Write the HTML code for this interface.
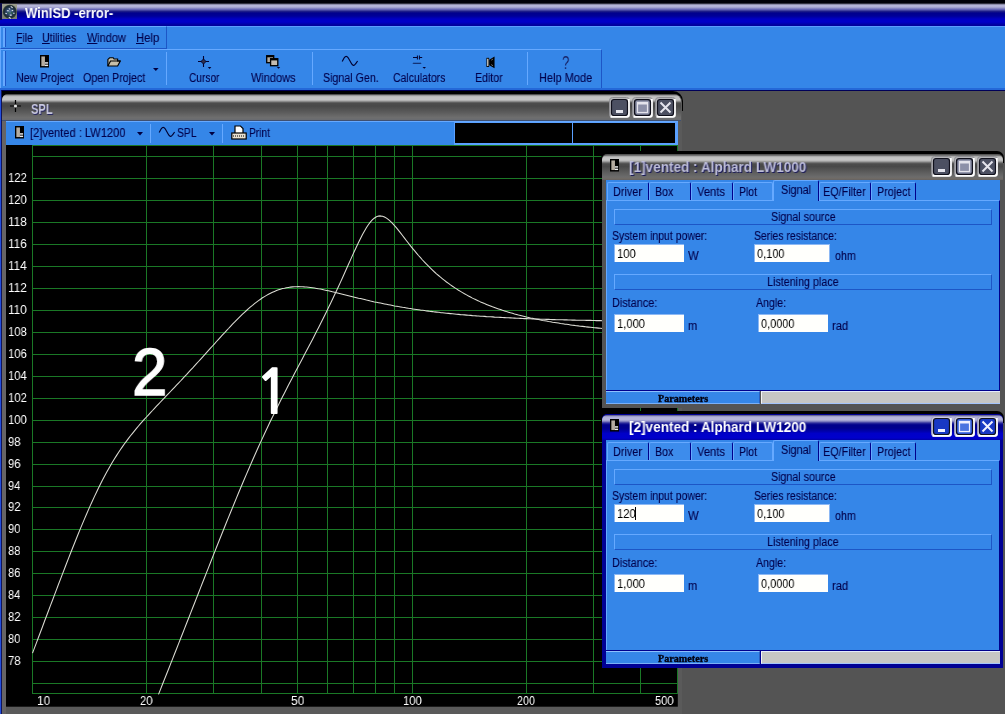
<!DOCTYPE html>
<html lang="en"><head><meta charset="utf-8"><title>WinISD -error-</title>
<style>
html,body{margin:0;padding:0}
body{width:1005px;height:714px;overflow:hidden;position:relative;background:#545454;font-family:"Liberation Sans",sans-serif;font-size:12px;color:#00004c}
.abs{position:absolute}
.t{position:absolute;white-space:nowrap;transform-origin:0 0;will-change:transform}
.k{-webkit-text-stroke:0.12px currentColor}
.t u{text-decoration:underline;text-decoration-thickness:1px;text-underline-offset:1px}
.sep{position:absolute;width:1px;background:#66a9ff}
</style></head>
<body>
<div class="abs" style="left:0px;top:0px;width:1005px;height:26px;background:linear-gradient(#000008 0,#000008 3px,#8c8ca8 4.5px,#b4b4d8 5.5px,#b0b0d6 7px,#6464b4 9.5px,#1c1c88 11.5px,#00008c 13px,#000098 16px,#0000c4 19px,#0000c8 22px,#0000a4 24.5px,#000098 26px);"></div>
<svg class="abs" style="left:1.6px;top:3.6px" width="15.5" height="15.5" viewBox="0 0 16 16"><defs><radialGradient id="spk" cx="0.5" cy="0.5" r="0.5"><stop offset="0" stop-color="#5a7a9c"/><stop offset="0.45" stop-color="#2c4468"/><stop offset="0.8" stop-color="#1c2c34"/><stop offset="1" stop-color="#3c4a40"/></radialGradient></defs><rect width="16" height="16" fill="#9a9c8c"/><rect x="0" y="8" width="16" height="8" fill="#7c8078"/><circle cx="8" cy="8" r="7.3" fill="url(#spk)"/><path d="M9 2.500l2 1.500M5 7h2M10 6.500l1.500 0.500M3.500 9.500l1.500 0.500M8 11.500h2M7 13.500l2 1.500M11.500 9.500h1.500M7 4.500l1.500 1" stroke="#dfe6f0" stroke-width="1.1" fill="none"/><path d="M6 9l2 0.500M9.500 8.500l1 1.500" stroke="#2c6a3c" stroke-width="1.2" fill="none"/></svg>
<div class="abs" style="left:0px;top:3px;width:1.6px;height:17px;background:#0c0c48;"></div>
<div class="t " style="left:25.20px;top:6.10px;font-size:14px;line-height:14px;transform:scaleX(0.9316);font-weight:bold;color:#fff;">WinISD -error-</div>
<div class="abs" style="left:0px;top:26px;width:1005px;height:62px;background:#3586e8;"></div>
<div class="abs" style="left:0px;top:26px;width:1005px;height:1px;background:#5c9cff;"></div>
<div class="abs" style="left:0px;top:26px;width:167px;height:23px;box-sizing:border-box;border-top:1px solid #66a9ff;border-left:1px solid #66a9ff;border-bottom:1px solid #1d56c6;border-right:1px solid #1d56c6;"></div>
<div class="abs" style="left:3px;top:28px;width:1.5px;height:19px;background:#66a9ff;"></div>
<div class="abs" style="left:4.5px;top:28px;width:1px;height:19px;background:#1d56c6;"></div>
<div class="t k" style="left:15.67px;top:31.85px;font-size:12.5px;line-height:12.5px;transform:scaleX(0.8333);"><u>F</u>ile</div>
<div class="t k" style="left:42.19px;top:31.85px;font-size:12.5px;line-height:12.5px;transform:scaleX(0.8535);"><u>U</u>tilities</div>
<div class="t k" style="left:86.96px;top:31.85px;font-size:12.5px;line-height:12.5px;transform:scaleX(0.8719);"><u>W</u>indow</div>
<div class="t k" style="left:136.40px;top:31.85px;font-size:12.5px;line-height:12.5px;transform:scaleX(0.9050);"><u>H</u>elp</div>
<div class="abs" style="left:0px;top:49px;width:602px;height:39px;box-sizing:border-box;border-top:1px solid #66a9ff;border-left:1px solid #66a9ff;border-right:1px solid #1d56c6;"></div>
<div class="abs" style="left:3px;top:51px;width:1.5px;height:35px;background:#66a9ff;"></div>
<div class="abs" style="left:4.5px;top:51px;width:1px;height:35px;background:#1d56c6;"></div>
<div class="t k" style="left:16.14px;top:71.85px;font-size:12.5px;line-height:12.5px;transform:scaleX(0.8552);">New Project</div>
<div class="t k" style="left:83.13px;top:71.85px;font-size:12.5px;line-height:12.5px;transform:scaleX(0.8528);">Open Project</div>
<div class="t k" style="left:189.01px;top:71.85px;font-size:12.5px;line-height:12.5px;transform:scaleX(0.8109);">Cursor</div>
<div class="t k" style="left:251.26px;top:71.85px;font-size:12.5px;line-height:12.5px;transform:scaleX(0.8765);">Windows</div>
<div class="t k" style="left:323.03px;top:71.85px;font-size:12.5px;line-height:12.5px;transform:scaleX(0.8531);">Signal Gen.</div>
<div class="t k" style="left:393.10px;top:71.85px;font-size:12.5px;line-height:12.5px;transform:scaleX(0.8381);">Calculators</div>
<div class="t k" style="left:474.65px;top:71.85px;font-size:12.5px;line-height:12.5px;transform:scaleX(0.8476);">Editor</div>
<div class="t k" style="left:538.62px;top:71.85px;font-size:12.5px;line-height:12.5px;transform:scaleX(0.8812);">Help Mode</div>
<div class="sep" style="left:166px;top:52px;height:33px"></div>
<div class="sep" style="left:312px;top:52px;height:33px"></div>
<div class="sep" style="left:527px;top:52px;height:33px"></div>
<svg class="abs" style="left:153.2px;top:68px" width="6" height="4"><path d="M0 0H5.600L2.800 3Z" fill="#000040"/></svg>
<svg class="abs" style="left:40.2px;top:55.3px" width="9" height="12.5" viewBox="0 0 10 13" preserveAspectRatio="none"><rect x="0" y="0" width="10" height="13" fill="#000"/><rect x="1.5" y="1.5" width="4" height="10" fill="#b4aca0"/><rect x="5.5" y="7.500" width="3.500" height="1.500" fill="#eee"/><rect x="5.5" y="10" width="3.500" height="1.500" fill="#eee"/></svg>
<svg class="abs" style="left:107px;top:56.8px" width="14.2" height="9.8" viewBox="0 0 16 12" preserveAspectRatio="none"><path d="M1 11V3L3 1H7L8 2.5H12V5H15L12 11Z" fill="#c8c0aa" stroke="#000" stroke-width="1.3"/><path d="M1 11L4 5H15" fill="none" stroke="#000" stroke-width="1.3"/></svg>
<svg class="abs" style="left:197.9px;top:55.9px" width="14" height="14" viewBox="0 0 14 14"><path d="M5.5 0V11M0 5.5H11" stroke="#000030" stroke-width="1.1"/><rect x="3.7" y="3.7" width="3.6" height="3.6" fill="#30304c" stroke="#000028" stroke-width="0.8" transform="rotate(45 5.5 5.5)"/><path d="M9.8 11H13.4L11.6 13Z" fill="#000030"/></svg>
<svg class="abs" style="left:266px;top:55px" width="15" height="15" viewBox="0 0 15 15"><rect x="0.7" y="0.7" width="7" height="7" fill="#b4aca0" stroke="#000" stroke-width="1.3"/><rect x="0.7" y="0.7" width="7" height="1.6" fill="#000"/><rect x="4.6" y="3.7" width="7.2" height="7" fill="#c4bcb0" stroke="#000" stroke-width="1.3"/><rect x="4.6" y="3.6" width="7.2" height="1.8" fill="#000"/><path d="M10.8 12H14.2L12.500 13.800Z" fill="#000030"/></svg>
<svg class="abs" style="left:341px;top:55px" width="18" height="13" viewBox="0 0 18 13"><path d="M1.2 6.500L3.200 2.800Q5.200 0 7.200 2.800L10 7.800Q12.300 12.400 14.600 8.800L16.600 6" fill="none" stroke="#000030" stroke-width="1.15"/></svg>
<svg class="abs" style="left:412px;top:54px" width="16" height="16" viewBox="0 0 16 16"><path d="M1 3.500H5.200M7.600 3.500H10.200M5.400 1.500V5.500M7.400 1.500V5.500" stroke="#000030" stroke-width="1" fill="none"/><path d="M1 9.800L2 8.800L3 9.800L4 8.800L5 9.800L6 8.800L7 9.800L8 8.800L9 9.800" stroke="#000030" stroke-width="0.9" fill="none"/><path d="M10.500 13H14L12.250 14.800Z" fill="#000030"/></svg>
<svg class="abs" style="left:485.8px;top:55.8px" width="9" height="12.800" viewBox="0 0 10 14" preserveAspectRatio="none"><path d="M3.500 4L9.500 0.500V13.500L3.500 10Z" fill="#000"/><rect x="0.500" y="2" width="3" height="10" fill="#000"/><rect x="1.300" y="3" width="1.400" height="8" fill="#e0dcd0"/><path d="M6 4.500l1.500 -1M6 9.500l1.500 1" stroke="#c8c8c8" stroke-width="0.8"/></svg>
<div class="t " style="left:561.79px;top:54.10px;font-size:18px;line-height:18px;transform:scaleX(0.7283);color:#182468;">?</div>
<div class="abs" style="left:0px;top:88px;width:1005px;height:1.6px;background:#2468d8;"></div>
<div class="abs" style="left:0px;top:89.6px;width:1005px;height:1.4px;background:#000058;"></div>
<div class="abs" style="left:0px;top:90px;width:1.5px;height:624px;background:#2450dc;"></div>
<div class="abs" style="left:2px;top:90.5px;width:680.5px;height:20px;background:#000;border-radius:0 10px 0 0;"></div>
<div class="abs" style="left:2px;top:94px;width:679.5px;height:620px;background:#5a5a5a;border-radius:6px 8px 0 0;"></div>
<div class="abs" style="left:2.2px;top:121px;width:3.9px;height:593px;background:#666464;"></div>
<div class="abs" style="left:1.4px;top:90px;width:0.8px;height:624px;background:#101458;"></div>
<div class="abs" style="left:2px;top:94px;width:679px;height:27px;background:linear-gradient(#505050 0.5px,#9a9a9a 1.5px,#bcbcbc 2.5px,#c4c4c4 3.5px,#c4c4c4 5.5px,#b0b0b0 6.5px,#8a8a8a 7.5px,#606060 8.5px,#4c4c4c 9.5px,#484848 12px,#5c5c5c 18.5px,#6e6e6e 23.5px,#6a6c70 25.5px,#405070 26.5px);border-radius:6px 8px 0 0;"></div>
<svg class="abs" style="left:10px;top:100px" width="12" height="12" viewBox="0 0 12 12"><path d="M5.5 0V12M0 6H11" stroke="#000" stroke-width="1.2"/><circle cx="5.5" cy="6" r="1.6" fill="#e0e0e0"/></svg>
<div class="t " style="left:30.68px;top:102.10px;font-size:14px;line-height:14px;transform:scaleX(0.7940);font-weight:bold;color:#c8c8e0;text-shadow:1px 1px 0 #282860;">SPL</div>
<svg class="abs" style="left:608.8px;top:96.8px" width="21" height="21" viewBox="0 0 21 21">
<rect x="0.5" y="0.5" width="20" height="20" rx="3" fill="#b4b4b8" stroke="#8e8e92" stroke-width="1"/>
<path d="M1.5 19.7H18Q19.7 19.7 19.7 18V2" fill="none" stroke="#fff" stroke-width="2.2"/>
<rect x="2.500" y="2.500" width="16" height="16" rx="2.500" fill="#4c5062" stroke="#10101c" stroke-width="1.2"/>
<rect x="7" y="13" width="7" height="3" fill="#e4e4ec"/>
</svg>
<svg class="abs" style="left:632.0px;top:96.8px" width="21" height="21" viewBox="0 0 21 21">
<rect x="0.5" y="0.5" width="20" height="20" rx="3" fill="#b4b4b8" stroke="#8e8e92" stroke-width="1"/>
<path d="M1.5 19.7H18Q19.7 19.7 19.7 18V2" fill="none" stroke="#fff" stroke-width="2.2"/>
<rect x="2.500" y="2.500" width="16" height="16" rx="2.500" fill="#4c5062" stroke="#10101c" stroke-width="1.2"/>
<rect x="3.500" y="3.500" width="14" height="14" rx="2" fill="#8c90a8"/>
<rect x="5.500" y="5.500" width="10" height="10" fill="none" stroke="#e4e4ec" stroke-width="1.2"/>
<rect x="5" y="5" width="11" height="2.500" fill="#e4e4ec"/>
</svg>
<svg class="abs" style="left:655.2px;top:96.8px" width="21" height="21" viewBox="0 0 21 21">
<rect x="0.5" y="0.5" width="20" height="20" rx="3" fill="#b4b4b8" stroke="#8e8e92" stroke-width="1"/>
<path d="M1.5 19.7H18Q19.7 19.7 19.7 18V2" fill="none" stroke="#fff" stroke-width="2.2"/>
<rect x="2.500" y="2.500" width="16" height="16" rx="2.500" fill="#4c5062" stroke="#10101c" stroke-width="1.2"/>
<path d="M5.500 5.500 L15.500 15.500 M15.500 5.500 L5.500 15.500" stroke="#e4e4ec" stroke-width="2" fill="none"/>
</svg>
<div class="abs" style="left:6px;top:121px;width:672px;height:24px;background:#3586e8;box-sizing:border-box;border-top:1px solid #66a9ff;"></div>
<svg class="abs" style="left:15px;top:126px" width="9" height="12.5" viewBox="0 0 10 13" preserveAspectRatio="none"><rect x="0" y="0" width="10" height="13" fill="#000"/><rect x="1.5" y="1.5" width="4" height="10" fill="#b4aca0"/><rect x="5.5" y="7.500" width="3.500" height="1.500" fill="#eee"/><rect x="5.5" y="10" width="3.500" height="1.500" fill="#eee"/></svg>
<div class="t k" style="left:30.04px;top:126.85px;font-size:12.5px;line-height:12.5px;transform:scaleX(0.8884);">[2]vented : LW1200</div>
<svg class="abs" style="left:136.7px;top:132px" width="6" height="4"><path d="M0 0H6L3 3.5Z" fill="#000040"/></svg>
<div class="sep" style="left:150px;top:124px;height:19px"></div>
<svg class="abs" style="left:158.2px;top:126px" width="18" height="13" viewBox="0 0 18 13"><path d="M1.2 6.500L3.200 2.800Q5.200 0 7.200 2.800L10 7.800Q12.300 12.400 14.600 8.800L16.600 6" fill="none" stroke="#000030" stroke-width="1.15"/></svg>
<div class="t k" style="left:177.44px;top:126.85px;font-size:12.5px;line-height:12.5px;transform:scaleX(0.8282);">SPL</div>
<svg class="abs" style="left:208.7px;top:132px" width="6" height="4"><path d="M0 0H6L3 3.5Z" fill="#000040"/></svg>
<div class="sep" style="left:222px;top:124px;height:19px"></div>
<svg class="abs" style="left:231px;top:125px" width="16" height="16" viewBox="0 0 16 16"><path d="M4 8V1H9.5L12 3.5V8" fill="#fff" stroke="#000" stroke-width="1.2"/><rect x="0.8" y="8" width="14.4" height="6" fill="#e8e0d0" stroke="#000" stroke-width="1.2"/><path d="M2 11H14" stroke="#000" stroke-width="1" stroke-dasharray="1 1"/></svg>
<div class="t k" style="left:249.28px;top:126.85px;font-size:12.5px;line-height:12.5px;transform:scaleX(0.8154);">Print</div>
<div class="abs" style="left:453.8px;top:121.5px;width:224px;height:23px;background:#5aa0ff;"></div>
<div class="abs" style="left:454.8px;top:123.4px;width:117.2px;height:19.2px;background:#000;"></div>
<div class="abs" style="left:573.2px;top:123.4px;width:102px;height:19.2px;background:#000;"></div>
<svg class="abs" style="left:0;top:0" width="1005" height="714" viewBox="0 0 1005 714">
<rect x="6" y="145" width="671.8" height="561.7" fill="#000"/>
<path d="M32.0 156.5 H678 M32.0 178.5 H678 M32.0 200.5 H678 M32.0 222.5 H678 M32.0 244.5 H678 M32.0 266.5 H678 M32.0 288.5 H678 M32.0 310.5 H678 M32.0 332.5 H678 M32.0 354.5 H678 M32.0 376.5 H678 M32.0 398.5 H678 M32.0 420.5 H678 M32.0 442.5 H678 M32.0 464.5 H678 M32.0 486.5 H678 M32.0 507.5 H678 M32.0 529.5 H678 M32.0 551.5 H678 M32.0 573.5 H678 M32.0 595.5 H678 M32.0 617.5 H678 M32.0 639.5 H678 M32.0 661.5 H678 M32.0 683.5 H678 M32.0 145.5 H678 M32.0 693.5 H678 M32.5 145.0 V694.0 M146.5 145.0 V694.0 M213.5 145.0 V694.0 M261.5 145.0 V694.0 M297.5 145.0 V694.0 M327.5 145.0 V694.0 M353.5 145.0 V694.0 M375.5 145.0 V694.0 M394.5 145.0 V694.0 M412.5 145.0 V694.0 M526.5 145.0 V694.0 M593.5 145.0 V694.0 M640.5 145.0 V694.0 M677.5 145.0 V694.0" stroke="#1a7826" stroke-width="1" fill="none" shape-rendering="crispEdges"/>
<path d="M32.5 653.1 34.5 647.9 36.5 642.6 38.5 637.3 40.5 632 42.5 626.7 44.5 621.3 46.5 616 48.5 610.7 50.5 605.4 52.5 600.2 54.5 594.9 56.5 589.6 58.5 584.3 60.5 579.1 62.5 573.9 64.5 568.7 66.5 563.5 68.5 558.4 70.5 553.3 72.5 548.2 74.5 543.2 76.5 538.2 78.5 533.3 80.5 528.4 82.5 523.6 84.5 518.9 86.5 514.2 88.5 509.6 90.5 505.1 92.5 500.7 94.5 496.4 96.5 492.2 98.5 488.1 100.5 484 102.5 480.1 104.5 476.3 106.5 472.6 108.5 469 110.5 465.5 112.5 462.1 114.5 458.8 116.5 455.6 118.5 452.5 120.5 449.5 122.5 446.6 124.5 443.8 126.5 441.1 128.5 438.4 130.5 435.8 132.5 433.3 134.5 430.8 136.5 428.4 138.5 426 140.5 423.7 142.5 421.4 144.5 419.2 146.5 417 148.5 414.8 150.5 412.6 152.5 410.5 154.5 408.3 156.5 406.2 158.5 404.1 160.5 402 162.5 399.9 164.5 397.8 166.5 395.7 168.5 393.6 170.5 391.5 172.5 389.4 174.5 387.3 176.5 385.2 178.5 383.1 180.5 381 182.5 378.8 184.5 376.7 186.5 374.6 188.5 372.4 190.5 370.2 192.5 368.1 194.5 365.9 196.5 363.7 198.5 361.5 200.5 359.3 202.5 357.1 204.5 354.9 206.5 352.6 208.5 350.4 210.5 348.2 212.5 346 214.5 343.8 216.5 341.5 218.5 339.3 220.5 337.1 222.5 334.9 224.5 332.8 226.5 330.6 228.5 328.5 230.5 326.3 232.5 324.2 234.5 322.2 236.5 320.1 238.5 318.1 240.5 316.1 242.5 314.2 244.5 312.3 246.5 310.5 248.5 308.7 250.5 306.9 252.5 305.3 254.5 303.6 256.5 302.1 258.5 300.6 260.5 299.2 262.5 297.8 264.5 296.6 266.5 295.4 268.5 294.2 270.5 293.2 272.5 292.2 274.5 291.4 276.5 290.6 278.5 289.8 280.5 289.2 282.5 288.6 284.5 288.2 286.5 287.7 288.5 287.4 290.5 287.1 292.5 286.9 294.5 286.8 296.5 286.7 298.5 286.6 300.5 286.7 302.5 286.7 304.5 286.9 306.5 287 308.5 287.2 310.5 287.5 312.5 287.8 314.5 288.1 316.5 288.4 318.5 288.8 320.5 289.1 322.5 289.5 324.5 290 326.5 290.4 328.5 290.8 330.5 291.3 332.5 291.8 334.5 292.2 336.5 292.7 338.5 293.2 340.5 293.7 342.5 294.2 344.5 294.7 346.5 295.2 348.5 295.7 350.5 296.2 352.5 296.7 354.5 297.2 356.5 297.7 358.5 298.2 360.5 298.6 362.5 299.1 364.5 299.6 366.5 300.1 368.5 300.5 370.5 301 372.5 301.4 374.5 301.9 376.5 302.3 378.5 302.7 380.5 303.1 382.5 303.5 384.5 303.9 386.5 304.3 388.5 304.7 390.5 305.1 392.5 305.5 394.5 305.9 396.5 306.2 398.5 306.6 400.5 306.9 402.5 307.3 404.5 307.6 406.5 307.9 408.5 308.3 410.5 308.6 412.5 308.9 414.5 309.2 416.5 309.5 418.5 309.8 420.5 310.1 422.5 310.3 424.5 310.6 426.5 310.9 428.5 311.1 430.5 311.4 432.5 311.6 434.5 311.9 436.5 312.1 438.5 312.3 440.5 312.6 442.5 312.8 444.5 313 446.5 313.2 448.5 313.4 450.5 313.6 452.5 313.8 454.5 314 456.5 314.2 458.5 314.4 460.5 314.6 462.5 314.7 464.5 314.9 466.5 315.1 468.5 315.3 470.5 315.4 472.5 315.6 474.5 315.7 476.5 315.9 478.5 316 480.5 316.2 482.5 316.3 484.5 316.4 486.5 316.6 488.5 316.7 490.5 316.8 492.5 316.9 494.5 317.1 496.5 317.2 498.5 317.3 500.5 317.4 502.5 317.5 504.5 317.6 506.5 317.7 508.5 317.8 510.5 317.9 512.5 318 514.5 318.1 516.5 318.2 518.5 318.3 520.5 318.4 522.5 318.5 524.5 318.6 526.5 318.6 528.5 318.7 530.5 318.8 532.5 318.9 534.5 319 536.5 319 538.5 319.1 540.5 319.2 542.5 319.2 544.5 319.3 546.5 319.4 548.5 319.4 550.5 319.5 552.5 319.6 554.5 319.6 556.5 319.7 558.5 319.7 560.5 319.8 562.5 319.8 564.5 319.9 566.5 319.9 568.5 320 570.5 320 572.5 320.1 574.5 320.1 576.5 320.2 578.5 320.2 580.5 320.3 582.5 320.3 584.5 320.3 586.5 320.4 588.5 320.4 590.5 320.4 592.5 320.5 594.5 320.5 596.5 320.6 598.5 320.6 600.5 320.6 602.5 320.7" stroke="#dcdcd4" stroke-width="1.06" fill="none" stroke-linejoin="round"/>
<path d="M158.5 694.4 160.5 689.4 162.5 684.3 164.5 679.3 166.5 674.2 168.5 669.2 170.5 664.1 172.5 659.1 174.5 654 176.5 649 178.5 643.9 180.5 638.8 182.5 633.7 184.5 628.6 186.5 623.5 188.5 618.5 190.5 613.4 192.5 608.3 194.5 603.2 196.5 598.1 198.5 593 200.5 587.9 202.5 582.8 204.5 577.7 206.5 572.6 208.5 567.6 210.5 562.5 212.5 557.4 214.5 552.4 216.5 547.3 218.5 542.3 220.5 537.3 222.5 532.3 224.5 527.3 226.5 522.3 228.5 517.4 230.5 512.5 232.5 507.6 234.5 502.7 236.5 497.9 238.5 493 240.5 488.3 242.5 483.5 244.5 478.8 246.5 474.1 248.5 469.5 250.5 464.9 252.5 460.3 254.5 455.8 256.5 451.3 258.5 446.8 260.5 442.4 262.5 438.1 264.5 433.8 266.5 429.5 268.5 425.3 270.5 421.1 272.5 417 274.5 412.9 276.5 408.8 278.5 404.8 280.5 400.8 282.5 396.8 284.5 392.9 286.5 389 288.5 385.1 290.5 381.3 292.5 377.5 294.5 373.6 296.5 369.8 298.5 366 300.5 362.2 302.5 358.4 304.5 354.6 306.5 350.8 308.5 347 310.5 343.2 312.5 339.4 314.5 335.5 316.5 331.6 318.5 327.7 320.5 323.8 322.5 319.8 324.5 315.8 326.5 311.7 328.5 307.6 330.5 303.5 332.5 299.3 334.5 295.1 336.5 290.8 338.5 286.5 340.5 282.1 342.5 277.7 344.5 273.3 346.5 268.8 348.5 264.3 350.5 259.9 352.5 255.4 354.5 251 356.5 246.7 358.5 242.5 360.5 238.4 362.5 234.5 364.5 230.9 366.5 227.5 368.5 224.5 370.5 221.9 372.5 219.7 374.5 218 376.5 216.8 378.5 216.1 380.5 215.9 382.5 216.2 384.5 217 386.5 218.1 388.5 219.6 390.5 221.4 392.5 223.4 394.5 225.6 396.5 227.9 398.5 230.4 400.5 232.9 402.5 235.5 404.5 238.1 406.5 240.7 408.5 243.3 410.5 245.8 412.5 248.3 414.5 250.7 416.5 253.1 418.5 255.5 420.5 257.7 422.5 260 424.5 262.1 426.5 264.2 428.5 266.2 430.5 268.2 432.5 270.1 434.5 272 436.5 273.8 438.5 275.5 440.5 277.2 442.5 278.8 444.5 280.4 446.5 282 448.5 283.4 450.5 284.9 452.5 286.3 454.5 287.6 456.5 288.9 458.5 290.2 460.5 291.4 462.5 292.6 464.5 293.8 466.5 294.9 468.5 296 470.5 297 472.5 298.1 474.5 299.1 476.5 300 478.5 300.9 480.5 301.9 482.5 302.7 484.5 303.6 486.5 304.4 488.5 305.2 490.5 306 492.5 306.8 494.5 307.5 496.5 308.2 498.5 308.9 500.5 309.6 502.5 310.3 504.5 310.9 506.5 311.6 508.5 312.2 510.5 312.8 512.5 313.3 514.5 313.9 516.5 314.4 518.5 315 520.5 315.5 522.5 316 524.5 316.5 526.5 317 528.5 317.4 530.5 317.9 532.5 318.3 534.5 318.8 536.5 319.2 538.5 319.6 540.5 320 542.5 320.4 544.5 320.7 546.5 321.1 548.5 321.5 550.5 321.8 552.5 322.2 554.5 322.5 556.5 322.8 558.5 323.1 560.5 323.5 562.5 323.8 564.5 324.1 566.5 324.3 568.5 324.6 570.5 324.9 572.5 325.2 574.5 325.4 576.5 325.7 578.5 325.9 580.5 326.2 582.5 326.4 584.5 326.6 586.5 326.9 588.5 327.1 590.5 327.3 592.5 327.5 594.5 327.7 596.5 327.9 598.5 328.1 600.5 328.3 602.5 328.5" stroke="#dcdcd4" stroke-width="1.06" fill="none" stroke-linejoin="round"/>
</svg>
<div class="t " style="left:7.94px;top:171.85px;font-size:12.5px;line-height:12.5px;transform:scaleX(0.9016);color:#fff;">122</div>
<div class="t " style="left:7.95px;top:193.85px;font-size:12.5px;line-height:12.5px;transform:scaleX(0.8946);color:#fff;">120</div>
<div class="t " style="left:7.91px;top:215.85px;font-size:12.5px;line-height:12.5px;transform:scaleX(0.9405);color:#fff;">118</div>
<div class="t " style="left:7.91px;top:237.85px;font-size:12.5px;line-height:12.5px;transform:scaleX(0.9405);color:#fff;">116</div>
<div class="t " style="left:7.91px;top:259.85px;font-size:12.5px;line-height:12.5px;transform:scaleX(0.9330);color:#fff;">114</div>
<div class="t " style="left:7.90px;top:281.85px;font-size:12.5px;line-height:12.5px;transform:scaleX(0.9457);color:#fff;">112</div>
<div class="t " style="left:7.91px;top:303.85px;font-size:12.5px;line-height:12.5px;transform:scaleX(0.9380);color:#fff;">110</div>
<div class="t " style="left:7.95px;top:325.85px;font-size:12.5px;line-height:12.5px;transform:scaleX(0.8969);color:#fff;">108</div>
<div class="t " style="left:7.95px;top:347.85px;font-size:12.5px;line-height:12.5px;transform:scaleX(0.8969);color:#fff;">106</div>
<div class="t " style="left:7.95px;top:369.85px;font-size:12.5px;line-height:12.5px;transform:scaleX(0.8900);color:#fff;">104</div>
<div class="t " style="left:7.94px;top:391.85px;font-size:12.5px;line-height:12.5px;transform:scaleX(0.9016);color:#fff;">102</div>
<div class="t " style="left:7.95px;top:413.85px;font-size:12.5px;line-height:12.5px;transform:scaleX(0.8946);color:#fff;">100</div>
<div class="t " style="left:8.31px;top:435.85px;font-size:12.5px;line-height:12.5px;transform:scaleX(0.8949);color:#fff;">98</div>
<div class="t " style="left:8.31px;top:457.85px;font-size:12.5px;line-height:12.5px;transform:scaleX(0.8949);color:#fff;">96</div>
<div class="t " style="left:8.31px;top:479.85px;font-size:12.5px;line-height:12.5px;transform:scaleX(0.8846);color:#fff;">94</div>
<div class="t " style="left:8.30px;top:500.85px;font-size:12.5px;line-height:12.5px;transform:scaleX(0.9020);color:#fff;">92</div>
<div class="t " style="left:8.31px;top:522.85px;font-size:12.5px;line-height:12.5px;transform:scaleX(0.8915);color:#fff;">90</div>
<div class="t " style="left:8.35px;top:544.85px;font-size:12.5px;line-height:12.5px;transform:scaleX(0.8915);color:#fff;">88</div>
<div class="t " style="left:8.35px;top:566.85px;font-size:12.5px;line-height:12.5px;transform:scaleX(0.8915);color:#fff;">86</div>
<div class="t " style="left:8.36px;top:588.85px;font-size:12.5px;line-height:12.5px;transform:scaleX(0.8812);color:#fff;">84</div>
<div class="t " style="left:8.35px;top:610.85px;font-size:12.5px;line-height:12.5px;transform:scaleX(0.8984);color:#fff;">82</div>
<div class="t " style="left:8.36px;top:632.85px;font-size:12.5px;line-height:12.5px;transform:scaleX(0.8880);color:#fff;">80</div>
<div class="t " style="left:8.26px;top:654.85px;font-size:12.5px;line-height:12.5px;transform:scaleX(0.8984);color:#fff;">78</div>
<div class="t " style="left:36.60px;top:694.85px;font-size:12.5px;line-height:12.5px;transform:scaleX(0.9520);color:#fff;">10</div>
<div class="t " style="left:140.16px;top:694.85px;font-size:12.5px;line-height:12.5px;transform:scaleX(0.8949);color:#fff;">20</div>
<div class="t " style="left:290.92px;top:694.85px;font-size:12.5px;line-height:12.5px;transform:scaleX(0.9575);color:#fff;">50</div>
<div class="t " style="left:402.95px;top:694.85px;font-size:12.5px;line-height:12.5px;transform:scaleX(0.8946);color:#fff;">100</div>
<div class="t " style="left:517.38px;top:694.85px;font-size:12.5px;line-height:12.5px;transform:scaleX(0.8586);color:#fff;">200</div>
<div class="t " style="left:655.36px;top:694.85px;font-size:12.5px;line-height:12.5px;transform:scaleX(0.8844);color:#fff;">500</div>
<div class="t " style="left:132.42px;top:339.10px;font-size:66px;line-height:66px;transform:scaleX(0.9635);color:#fff;-webkit-text-stroke:1.4px #fff;">2</div>
<div class="t" style="left:253.86px;top:363px;font-family:NanumGothic,'Liberation Sans',sans-serif;font-weight:bold;font-size:60.9px;line-height:60.9px;color:#fff;transform:scaleX(1.020)">1</div>
<div class="abs" style="left:601px;top:151px;width:403px;height:12px;background:#000;border-radius:7px 7px 0 0;"></div>
<div class="abs" style="left:602px;top:154px;width:401px;height:253.8px;background:#545454;border-radius:5px 5px 0 0;"></div>
<div class="abs" style="left:602px;top:154.5px;width:401px;height:25.5px;background:linear-gradient(#505050 0,#9a9a9a 1px,#bcbcbc 2px,#c4c4c4 3px,#c4c4c4 5px,#b0b0b0 6px,#8a8a8a 7px,#606060 8px,#4c4c4c 9px,#484848 11.5px,#5c5c5c 17px,#6c6c6c 22px,#706a64 24px,#5a5a60 25.5px);border-radius:5px 5px 0 0;"></div>
<svg class="abs" style="left:610px;top:159.3px" width="9" height="12.5" viewBox="0 0 10 13" preserveAspectRatio="none"><rect x="0" y="0" width="10" height="13" fill="#000"/><rect x="1.5" y="1.5" width="4" height="10" fill="#b4aca0"/><rect x="5.5" y="7.500" width="3.500" height="1.500" fill="#eee"/><rect x="5.5" y="10" width="3.500" height="1.500" fill="#eee"/></svg>
<div class="t " style="left:629.47px;top:160.10px;font-size:14px;line-height:14px;transform:scaleX(0.9686);font-weight:bold;color:#bcbcd8;text-shadow:1px 1px 0 #1c1c58;">[1]vented : Alphard LW1000</div>
<svg class="abs" style="left:930.8px;top:156px" width="21" height="21" viewBox="0 0 21 21">
<rect x="0.5" y="0.5" width="20" height="20" rx="3" fill="#b4b4b8" stroke="#8e8e92" stroke-width="1"/>
<path d="M1.5 19.7H18Q19.7 19.7 19.7 18V2" fill="none" stroke="#fff" stroke-width="2.2"/>
<rect x="2.500" y="2.500" width="16" height="16" rx="2.500" fill="#4c5062" stroke="#10101c" stroke-width="1.2"/>
<rect x="7" y="13" width="7" height="3" fill="#e4e4ec"/>
</svg>
<svg class="abs" style="left:954.0px;top:156px" width="21" height="21" viewBox="0 0 21 21">
<rect x="0.5" y="0.5" width="20" height="20" rx="3" fill="#b4b4b8" stroke="#8e8e92" stroke-width="1"/>
<path d="M1.5 19.7H18Q19.7 19.7 19.7 18V2" fill="none" stroke="#fff" stroke-width="2.2"/>
<rect x="2.500" y="2.500" width="16" height="16" rx="2.500" fill="#4c5062" stroke="#10101c" stroke-width="1.2"/>
<rect x="3.500" y="3.500" width="14" height="14" rx="2" fill="#8c90a8"/>
<rect x="5.500" y="5.500" width="10" height="10" fill="none" stroke="#e4e4ec" stroke-width="1.2"/>
<rect x="5" y="5" width="11" height="2.500" fill="#e4e4ec"/>
</svg>
<svg class="abs" style="left:977.2px;top:156px" width="21" height="21" viewBox="0 0 21 21">
<rect x="0.5" y="0.5" width="20" height="20" rx="3" fill="#b4b4b8" stroke="#8e8e92" stroke-width="1"/>
<path d="M1.5 19.7H18Q19.7 19.7 19.7 18V2" fill="none" stroke="#fff" stroke-width="2.2"/>
<rect x="2.500" y="2.500" width="16" height="16" rx="2.500" fill="#4c5062" stroke="#10101c" stroke-width="1.2"/>
<path d="M5.500 5.500 L15.500 15.500 M15.500 5.500 L5.500 15.500" stroke="#e4e4ec" stroke-width="2" fill="none"/>
</svg>
<div class="abs" style="left:605.5px;top:179.6px;width:394.5px;height:210.4px;background:#3586e8;"></div>
<div class="abs" style="left:605.5px;top:200px;width:394.5px;height:190px;box-sizing:border-box;border-top:1px solid #66a9ff;border-left:1px solid #66a9ff;border-right:1px solid #00008c"></div>
<div class="abs" style="left:607px;top:182px;width:42px;height:18px;background:#3d8cec;box-sizing:border-box;border:1px solid #66a9ff;border-right:1.500px solid #00008c;border-bottom:none;border-radius:2px 2px 0 0;"></div>
<div class="t k" style="left:612.53px;top:185.85px;font-size:12.5px;line-height:12.5px;transform:scaleX(0.8678);">Driver</div>
<div class="abs" style="left:649px;top:182px;width:42px;height:18px;background:#3d8cec;box-sizing:border-box;border:1px solid #66a9ff;border-right:1.500px solid #00008c;border-bottom:none;border-radius:2px 2px 0 0;"></div>
<div class="t k" style="left:654.85px;top:185.85px;font-size:12.5px;line-height:12.5px;transform:scaleX(0.8509);">Box</div>
<div class="abs" style="left:691px;top:182px;width:42px;height:18px;background:#3d8cec;box-sizing:border-box;border:1px solid #66a9ff;border-right:1.500px solid #00008c;border-bottom:none;border-radius:2px 2px 0 0;"></div>
<div class="t k" style="left:696.76px;top:185.85px;font-size:12.5px;line-height:12.5px;transform:scaleX(0.8943);">Vents</div>
<div class="abs" style="left:733px;top:182px;width:40px;height:18px;background:#3d8cec;box-sizing:border-box;border:1px solid #66a9ff;border-right:1px solid #66a9ff;border-bottom:none;border-radius:2px 2px 0 0;"></div>
<div class="t k" style="left:738.96px;top:185.85px;font-size:12.5px;line-height:12.5px;transform:scaleX(0.8362);">Plot</div>
<div class="abs" style="left:773px;top:180px;width:46px;height:21px;background:#3586e8;box-sizing:border-box;border:1px solid #66a9ff;border-right:1.500px solid #00008c;border-bottom:none;border-radius:2px 2px 0 0;"></div>
<div class="t k" style="left:781.23px;top:183.85px;font-size:12.5px;line-height:12.5px;transform:scaleX(0.8636);">Signal</div>
<div class="abs" style="left:819px;top:182px;width:52px;height:18px;background:#3d8cec;box-sizing:border-box;border:1px solid #66a9ff;border-right:1.500px solid #00008c;border-bottom:none;border-radius:2px 2px 0 0;"></div>
<div class="t k" style="left:822.74px;top:185.85px;font-size:12.5px;line-height:12.5px;transform:scaleX(0.8640);">EQ/Filter</div>
<div class="abs" style="left:871px;top:182px;width:45px;height:18px;background:#3d8cec;box-sizing:border-box;border:1px solid #66a9ff;border-right:1.500px solid #00008c;border-bottom:none;border-radius:2px 2px 0 0;"></div>
<div class="t k" style="left:876.74px;top:185.85px;font-size:12.5px;line-height:12.5px;transform:scaleX(0.8587);">Project</div>
<div class="abs" style="left:614px;top:209px;width:378px;height:15.5px;box-sizing:border-box;border:1px solid #66a9ff;border-right-color:#1d56c6;border-bottom-color:#1d56c6;"></div>
<div class="t k" style="left:771.03px;top:210.85px;font-size:12.5px;line-height:12.5px;transform:scaleX(0.8547);">Signal source</div>
<div class="abs" style="left:614px;top:274px;width:378px;height:15.5px;box-sizing:border-box;border:1px solid #66a9ff;border-right-color:#1d56c6;border-bottom-color:#1d56c6;"></div>
<div class="t k" style="left:766.84px;top:275.85px;font-size:12.5px;line-height:12.5px;transform:scaleX(0.8589);">Listening place</div>
<div class="t k" style="left:612.14px;top:229.85px;font-size:12.5px;line-height:12.5px;transform:scaleX(0.8409);">System input power:</div>
<div class="t k" style="left:754.44px;top:229.85px;font-size:12.5px;line-height:12.5px;transform:scaleX(0.8336);">Series resistance:</div>
<div class="t k" style="left:611.73px;top:296.85px;font-size:12.5px;line-height:12.5px;transform:scaleX(0.8680);">Distance:</div>
<div class="t k" style="left:756.00px;top:296.85px;font-size:12.5px;line-height:12.5px;transform:scaleX(0.8484);">Angle:</div>
<div class="abs" style="left:614.2px;top:244.4px;width:70.2px;height:18.1px;background:#8cb8f4;"></div>
<div class="abs" style="left:614.5px;top:244.7px;width:69.6px;height:17.5px;background:#fffffc;"></div>
<div class="abs" style="left:754.2px;top:244.4px;width:75.5px;height:18.1px;background:#8cb8f4;"></div>
<div class="abs" style="left:754.5px;top:244.7px;width:74.9px;height:17.5px;background:#fffffc;"></div>
<div class="abs" style="left:614.2px;top:314.3px;width:70.2px;height:18.1px;background:#8cb8f4;"></div>
<div class="abs" style="left:614.5px;top:314.6px;width:69.6px;height:17.5px;background:#fffffc;"></div>
<div class="abs" style="left:758.3px;top:314.3px;width:70.2px;height:18.1px;background:#8cb8f4;"></div>
<div class="abs" style="left:758.6px;top:314.6px;width:69.6px;height:17.5px;background:#fffffc;"></div>
<div class="t " style="left:616.75px;top:247.85px;font-size:12.5px;line-height:12.5px;transform:scaleX(0.8946);color:#000;">100</div>
<div class="t " style="left:757.20px;top:247.85px;font-size:12.5px;line-height:12.5px;transform:scaleX(0.8783);color:#000;">0,100</div>
<div class="t " style="left:616.75px;top:317.85px;font-size:12.5px;line-height:12.5px;transform:scaleX(0.8930);color:#000;">1,000</div>
<div class="t " style="left:761.31px;top:317.85px;font-size:12.5px;line-height:12.5px;transform:scaleX(0.8755);color:#000;">0,0000</div>
<div class="t k" style="left:688.15px;top:249.85px;font-size:12.5px;line-height:12.5px;transform:scaleX(0.9106);">W</div>
<div class="t k" style="left:835.27px;top:249.85px;font-size:12.5px;line-height:12.5px;transform:scaleX(0.8522);">ohm</div>
<div class="t k" style="left:687.79px;top:319.85px;font-size:12.5px;line-height:12.5px;transform:scaleX(0.8864);">m</div>
<div class="t k" style="left:831.88px;top:319.85px;font-size:12.5px;line-height:12.5px;transform:scaleX(0.8997);">rad</div>
<div class="abs" style="left:605.5px;top:390px;width:394.5px;height:1.2px;background:#00008c;"></div>
<div class="abs" style="left:605.5px;top:391.2px;width:154.5px;height:13.3px;background:#3586e8;box-sizing:border-box;border-top:1px solid #8cc0ff;border-bottom:1px solid #7ab0f8;border-right:1px solid #2a60c0;"></div>
<div class="abs" style="left:760.5px;top:391.2px;width:239.5px;height:13.3px;background:#c6c6c4;box-sizing:border-box;border-top:1px solid #e4ecfc;border-left:1px solid #f4f4f4;border-bottom:1.300px solid #a4c4fc;"></div>
<div class="t " style="left:657.65px;top:393.60px;font-size:10px;line-height:10px;transform:scaleX(1.0143);font-family:'Liberation Serif',serif;font-weight:bold;color:#000010;-webkit-text-stroke:0.35px #000010;">Parameters</div>
<div class="abs" style="left:601px;top:411px;width:403px;height:12px;background:#000;border-radius:7px 7px 0 0;"></div>
<div class="abs" style="left:602px;top:414px;width:401px;height:253.8px;background:#000094;border-radius:5px 5px 0 0;"></div>
<div class="abs" style="left:602px;top:414.5px;width:401px;height:25.5px;background:linear-gradient(#404070 0,#9090c0 1px,#b0b0d8 2px,#b4b4dc 3px,#b4b4dc 4.5px,#9898cc 6px,#6060b0 7px,#3030a0 8px,#101090 9px,#00008c 10px,#00008c 13px,#0000a8 16px,#0000c8 18.5px,#0000cc 23px,#0000b0 24.5px,#0000a0 25.5px);border-radius:5px 5px 0 0;"></div>
<svg class="abs" style="left:610px;top:419.3px" width="9" height="12.5" viewBox="0 0 10 13" preserveAspectRatio="none"><rect x="0" y="0" width="10" height="13" fill="#000"/><rect x="1.5" y="1.5" width="4" height="10" fill="#b4aca0"/><rect x="5.5" y="7.500" width="3.500" height="1.500" fill="#eee"/><rect x="5.5" y="10" width="3.500" height="1.500" fill="#eee"/></svg>
<div class="t " style="left:629.47px;top:420.10px;font-size:14px;line-height:14px;transform:scaleX(0.9686);font-weight:bold;color:#ffffff;text-shadow:none;">[2]vented : Alphard LW1200</div>
<svg class="abs" style="left:930.8px;top:416px" width="21" height="21" viewBox="0 0 21 21">
<rect x="0.5" y="0.5" width="20" height="20" rx="3" fill="#c8c8e0" stroke="#9c9cc0" stroke-width="1"/>
<path d="M1.5 19.7H18Q19.7 19.7 19.7 18V2" fill="none" stroke="#fff" stroke-width="2.2"/>
<rect x="2.500" y="2.500" width="16" height="16" rx="2.500" fill="#1838c4" stroke="#10101c" stroke-width="1.2"/>
<rect x="7" y="13" width="7" height="3" fill="#f0f0ff"/>
</svg>
<svg class="abs" style="left:954.0px;top:416px" width="21" height="21" viewBox="0 0 21 21">
<rect x="0.5" y="0.5" width="20" height="20" rx="3" fill="#c8c8e0" stroke="#9c9cc0" stroke-width="1"/>
<path d="M1.5 19.7H18Q19.7 19.7 19.7 18V2" fill="none" stroke="#fff" stroke-width="2.2"/>
<rect x="2.500" y="2.500" width="16" height="16" rx="2.500" fill="#1838c4" stroke="#10101c" stroke-width="1.2"/>
<rect x="3.500" y="3.500" width="14" height="14" rx="2" fill="#4a74e0"/>
<rect x="5.500" y="5.500" width="10" height="10" fill="none" stroke="#f0f0ff" stroke-width="1.2"/>
<rect x="5" y="5" width="11" height="2.500" fill="#f0f0ff"/>
</svg>
<svg class="abs" style="left:977.2px;top:416px" width="21" height="21" viewBox="0 0 21 21">
<rect x="0.5" y="0.5" width="20" height="20" rx="3" fill="#c8c8e0" stroke="#9c9cc0" stroke-width="1"/>
<path d="M1.5 19.7H18Q19.7 19.7 19.7 18V2" fill="none" stroke="#fff" stroke-width="2.2"/>
<rect x="2.500" y="2.500" width="16" height="16" rx="2.500" fill="#1838c4" stroke="#10101c" stroke-width="1.2"/>
<path d="M5.500 5.500 L15.500 15.500 M15.500 5.500 L5.500 15.500" stroke="#f0f0ff" stroke-width="2" fill="none"/>
</svg>
<div class="abs" style="left:605.5px;top:439.6px;width:394.5px;height:210.4px;background:#3586e8;"></div>
<div class="abs" style="left:605.5px;top:460px;width:394.5px;height:190px;box-sizing:border-box;border-top:1px solid #66a9ff;border-left:1px solid #66a9ff;border-right:1px solid #00008c"></div>
<div class="abs" style="left:607px;top:442px;width:42px;height:18px;background:#3d8cec;box-sizing:border-box;border:1px solid #66a9ff;border-right:1.500px solid #00008c;border-bottom:none;border-radius:2px 2px 0 0;"></div>
<div class="t k" style="left:612.53px;top:445.85px;font-size:12.5px;line-height:12.5px;transform:scaleX(0.8678);">Driver</div>
<div class="abs" style="left:649px;top:442px;width:42px;height:18px;background:#3d8cec;box-sizing:border-box;border:1px solid #66a9ff;border-right:1.500px solid #00008c;border-bottom:none;border-radius:2px 2px 0 0;"></div>
<div class="t k" style="left:654.85px;top:445.85px;font-size:12.5px;line-height:12.5px;transform:scaleX(0.8509);">Box</div>
<div class="abs" style="left:691px;top:442px;width:42px;height:18px;background:#3d8cec;box-sizing:border-box;border:1px solid #66a9ff;border-right:1.500px solid #00008c;border-bottom:none;border-radius:2px 2px 0 0;"></div>
<div class="t k" style="left:696.76px;top:445.85px;font-size:12.5px;line-height:12.5px;transform:scaleX(0.8943);">Vents</div>
<div class="abs" style="left:733px;top:442px;width:40px;height:18px;background:#3d8cec;box-sizing:border-box;border:1px solid #66a9ff;border-right:1px solid #66a9ff;border-bottom:none;border-radius:2px 2px 0 0;"></div>
<div class="t k" style="left:738.96px;top:445.85px;font-size:12.5px;line-height:12.5px;transform:scaleX(0.8362);">Plot</div>
<div class="abs" style="left:773px;top:440px;width:46px;height:21px;background:#3586e8;box-sizing:border-box;border:1px solid #66a9ff;border-right:1.500px solid #00008c;border-bottom:none;border-radius:2px 2px 0 0;"></div>
<div class="t k" style="left:781.23px;top:443.85px;font-size:12.5px;line-height:12.5px;transform:scaleX(0.8636);">Signal</div>
<div class="abs" style="left:819px;top:442px;width:52px;height:18px;background:#3d8cec;box-sizing:border-box;border:1px solid #66a9ff;border-right:1.500px solid #00008c;border-bottom:none;border-radius:2px 2px 0 0;"></div>
<div class="t k" style="left:822.74px;top:445.85px;font-size:12.5px;line-height:12.5px;transform:scaleX(0.8640);">EQ/Filter</div>
<div class="abs" style="left:871px;top:442px;width:45px;height:18px;background:#3d8cec;box-sizing:border-box;border:1px solid #66a9ff;border-right:1.500px solid #00008c;border-bottom:none;border-radius:2px 2px 0 0;"></div>
<div class="t k" style="left:876.74px;top:445.85px;font-size:12.5px;line-height:12.5px;transform:scaleX(0.8587);">Project</div>
<div class="abs" style="left:614px;top:469px;width:378px;height:15.5px;box-sizing:border-box;border:1px solid #66a9ff;border-right-color:#1d56c6;border-bottom-color:#1d56c6;"></div>
<div class="t k" style="left:771.03px;top:470.85px;font-size:12.5px;line-height:12.5px;transform:scaleX(0.8547);">Signal source</div>
<div class="abs" style="left:614px;top:534px;width:378px;height:15.5px;box-sizing:border-box;border:1px solid #66a9ff;border-right-color:#1d56c6;border-bottom-color:#1d56c6;"></div>
<div class="t k" style="left:766.84px;top:535.85px;font-size:12.5px;line-height:12.5px;transform:scaleX(0.8589);">Listening place</div>
<div class="t k" style="left:612.14px;top:489.85px;font-size:12.5px;line-height:12.5px;transform:scaleX(0.8409);">System input power:</div>
<div class="t k" style="left:754.44px;top:489.85px;font-size:12.5px;line-height:12.5px;transform:scaleX(0.8336);">Series resistance:</div>
<div class="t k" style="left:611.73px;top:556.85px;font-size:12.5px;line-height:12.5px;transform:scaleX(0.8680);">Distance:</div>
<div class="t k" style="left:756.00px;top:556.85px;font-size:12.5px;line-height:12.5px;transform:scaleX(0.8484);">Angle:</div>
<div class="abs" style="left:614.2px;top:504.4px;width:70.2px;height:18.1px;background:#8cb8f4;"></div>
<div class="abs" style="left:614.5px;top:504.7px;width:69.6px;height:17.5px;background:#fffffc;"></div>
<div class="abs" style="left:754.2px;top:504.4px;width:75.5px;height:18.1px;background:#8cb8f4;"></div>
<div class="abs" style="left:754.5px;top:504.7px;width:74.9px;height:17.5px;background:#fffffc;"></div>
<div class="abs" style="left:614.2px;top:574.3px;width:70.2px;height:18.1px;background:#8cb8f4;"></div>
<div class="abs" style="left:614.5px;top:574.6px;width:69.6px;height:17.5px;background:#fffffc;"></div>
<div class="abs" style="left:758.3px;top:574.3px;width:70.2px;height:18.1px;background:#8cb8f4;"></div>
<div class="abs" style="left:758.6px;top:574.6px;width:69.6px;height:17.5px;background:#fffffc;"></div>
<div class="t " style="left:616.75px;top:507.85px;font-size:12.5px;line-height:12.5px;transform:scaleX(0.8946);color:#000;">120</div>
<div class="abs" style="left:635.4px;top:507px;width:1px;height:12.5px;background:#000;"></div>
<div class="t " style="left:757.20px;top:507.85px;font-size:12.5px;line-height:12.5px;transform:scaleX(0.8783);color:#000;">0,100</div>
<div class="t " style="left:616.75px;top:577.85px;font-size:12.5px;line-height:12.5px;transform:scaleX(0.8930);color:#000;">1,000</div>
<div class="t " style="left:761.31px;top:577.85px;font-size:12.5px;line-height:12.5px;transform:scaleX(0.8755);color:#000;">0,0000</div>
<div class="t k" style="left:688.15px;top:509.85px;font-size:12.5px;line-height:12.5px;transform:scaleX(0.9106);">W</div>
<div class="t k" style="left:835.27px;top:509.85px;font-size:12.5px;line-height:12.5px;transform:scaleX(0.8522);">ohm</div>
<div class="t k" style="left:687.79px;top:579.85px;font-size:12.5px;line-height:12.5px;transform:scaleX(0.8864);">m</div>
<div class="t k" style="left:831.88px;top:579.85px;font-size:12.5px;line-height:12.5px;transform:scaleX(0.8997);">rad</div>
<div class="abs" style="left:605.5px;top:650px;width:394.5px;height:1.2px;background:#00008c;"></div>
<div class="abs" style="left:605.5px;top:651.2px;width:154.5px;height:13.3px;background:#3586e8;box-sizing:border-box;border-top:1px solid #8cc0ff;border-bottom:1px solid #7ab0f8;border-right:1px solid #2a60c0;"></div>
<div class="abs" style="left:760.5px;top:651.2px;width:239.5px;height:13.3px;background:#c6c6c4;box-sizing:border-box;border-top:1px solid #e4ecfc;border-left:1px solid #f4f4f4;border-bottom:1.300px solid #a4c4fc;"></div>
<div class="t " style="left:657.65px;top:653.60px;font-size:10px;line-height:10px;transform:scaleX(1.0143);font-family:'Liberation Serif',serif;font-weight:bold;color:#000010;-webkit-text-stroke:0.35px #000010;">Parameters</div>
</body></html>
